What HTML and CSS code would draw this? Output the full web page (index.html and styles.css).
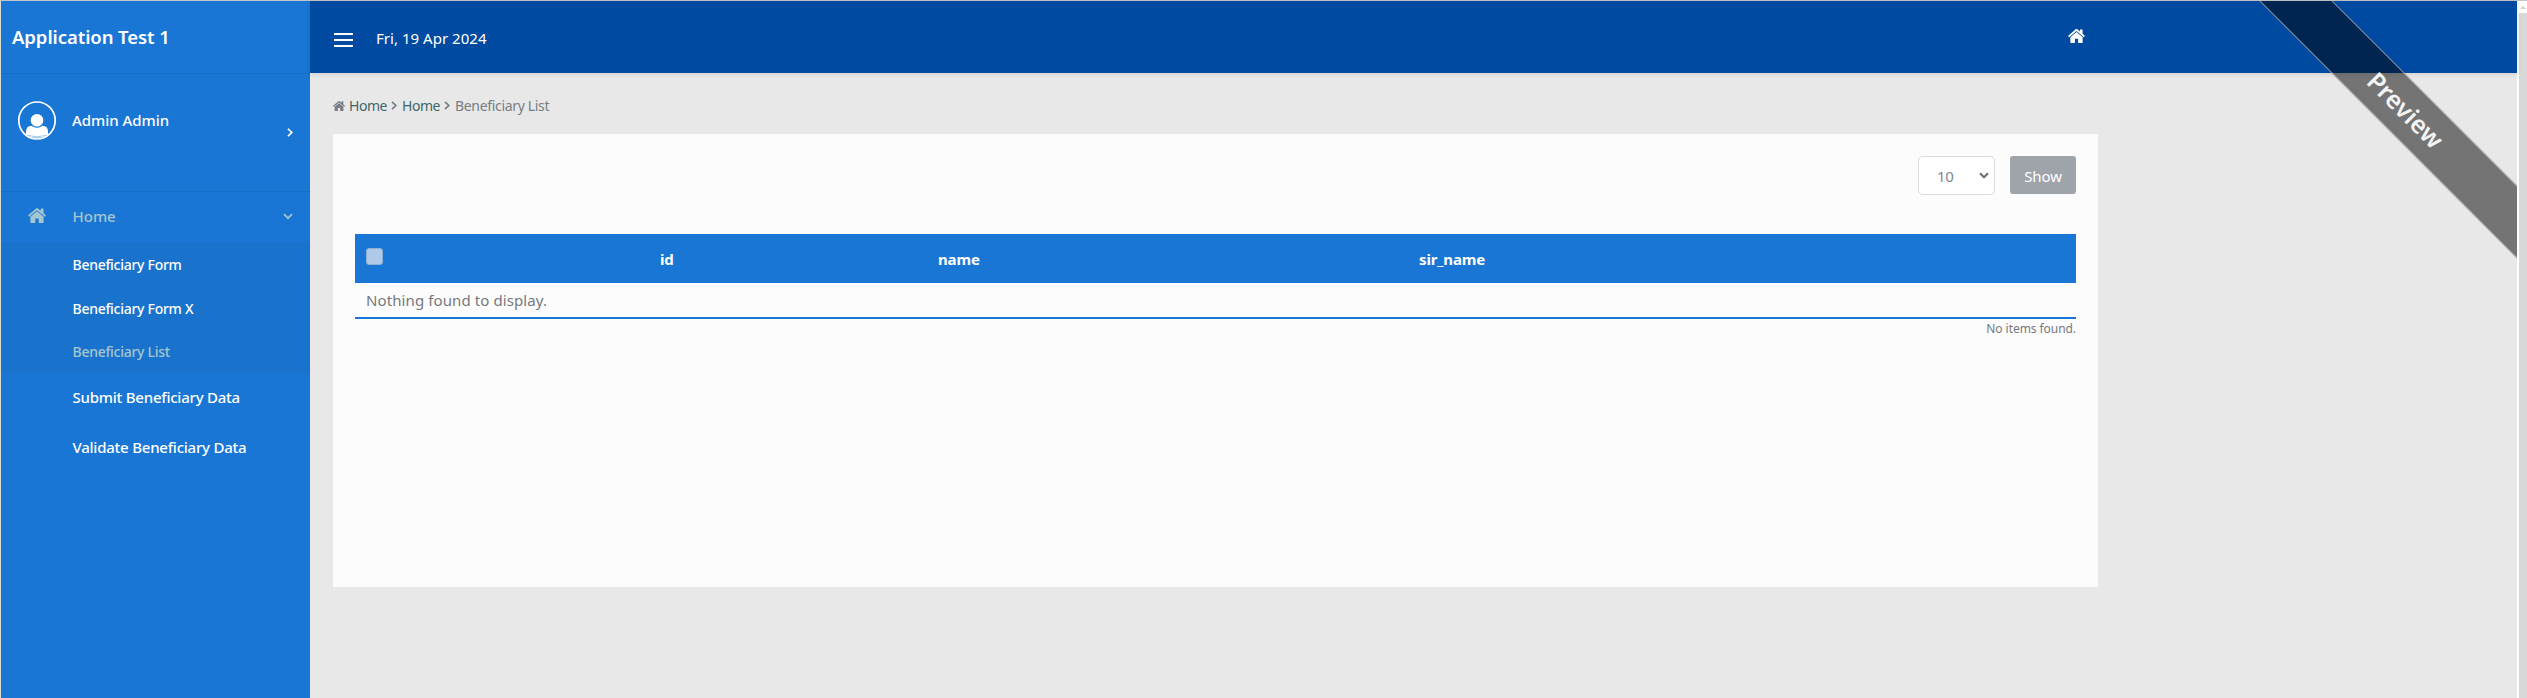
FILE: index.html
```html
<!DOCTYPE html>
<html lang="en">
<head>
<meta charset="utf-8">
<title>Beneficiary List</title>
<link rel="stylesheet" href="styles.css">
</head>
<body>
<svg class="defs" width="0" height="0" aria-hidden="true">
  <symbol id="house" viewBox="0 0 18 15">
    <path d="M9 3.2 15.6 8.8V14.2q0 .8-.8.8H10.7V10.4H7.3V15H3.2q-.8 0-.8-.8V8.800z"/>
    <path d="M8.1.4q.9-.7 1.8 0L12.7 2.8V.9q0-.4.4-.4h2q.4 0 .4.4v4.300l2.300 2q.3.3 0 .6l-.6.7q-.3.3-.6 0L9 2.200 1.400 8.500q-.3.3-.6 0L.2 7.800q-.3-.3 0-.6z"/>
  </symbol>
  <symbol id="angle" viewBox="0 0 6 9"><path d="M1 .8 4.800 4.500 1 8.200" fill="none" stroke="currentColor" stroke-width="1.700"/></symbol>
</svg>
<div class="app">
  <aside class="sidebar">
    <div class="brand"><span>Application Test 1</span></div>
    <div class="profile">
      <svg class="avatar" viewBox="0 0 38 39"><ellipse cx="19" cy="19.5" rx="18.2" ry="18.5" fill="none" stroke="#fff" stroke-width="1.7"/><circle cx="19" cy="19.2" r="6.3" fill="#fff"/><path d="M8 33.5v-2.8q0-6 5.500-6 2.500 2 5.500 2t5.500-2q5.500 0 5.500 6v2.800q-4.500 3.300-11 3.300t-11-3.300z" fill="#fff"/><path d="M9.500 34.300q9.500 3 19 0" stroke="#8dbbe9" stroke-width=".8" fill="none"/></svg>
      <span>Admin Admin</span>
      <svg class="profile-arrow"><use href="#angle"/></svg>
    </div>
    <nav>
      <a class="item parent active"><svg class="nav-house"><use href="#house"/></svg><span>Home</span><svg class="caret" viewBox="0 0 10 7"><path d="M1 1.200 5 5.200 9 1.200" fill="none" stroke="currentColor" stroke-width="1.700"/></svg></a>
      <div class="submenu">
        <a>Beneficiary Form</a>
        <a>Beneficiary Form X</a>
        <a class="active">Beneficiary List</a>
      </div>
      <a class="item leaf">Submit Beneficiary Data</a>
      <a class="item leaf">Validate Beneficiary Data</a>
    </nav>
  </aside>
  <main>
    <header>
      <div class="burger"><i></i><i></i><i></i></div>
      <span class="date">Fri, 19 Apr 2024</span>
      <svg class="top-house"><use href="#house"/></svg>
    </header>
    <div class="crumbs">
      <svg class="crumb-house"><use href="#house"/></svg>
      <a>Home</a><svg class="sep"><use href="#angle"/></svg>
      <a>Home</a><svg class="sep"><use href="#angle"/></svg>
      <span class="current">Beneficiary List</span>
    </div>
    <section class="panel">
      <div class="controls">
        <div class="select"><span>10</span><svg viewBox="0 0 10 7"><path d="M1 1.200 5 5.200 9 1.200" fill="none" stroke="#6d7275" stroke-width="2.200"/></svg></div>
        <button class="show">Show</button>
      </div>
      <table>
        <colgroup><col class="c1"><col class="c2"><col class="c3"><col></colgroup>
        <thead><tr><th><span class="check"></span></th><th>id</th><th>name</th><th>sir_name</th></tr></thead>
        <tbody><tr><td colspan="4">Nothing found to display.</td></tr></tbody>
      </table>
      <div class="count"><span>No items found.</span></div>
    </section>
    <div class="ribbon-box"><div class="ribbon"><span>Preview</span></div></div>
  </main>
  <div class="scrollbar"><div class="up"></div><div class="thumb"></div></div>
</div>
</body>
</html>
```
FILE: styles.css
```css
* { box-sizing: border-box; }
body { margin: 0; font-family: "Noto Sans", "Open Sans", sans-serif; font-size: 15px; overflow: hidden; }
svg { display: block; fill: currentColor; flex: none; }
span, a { white-space: nowrap; }
.defs { position: absolute; }
.app { display: flex; height: 698px; border-top: 1px solid #c3c5c6; border-left: 1px solid #dcdccf; background: #e8e8e8; }

.sidebar { width: 309px; flex: none; background: #1976d5; color: #fff; font-weight: 500; }
.brand { height: 73px; border-bottom: 1px solid #156dc6; padding: 0 0 0 11px; line-height: 72px; font-size: 18.5px; font-weight: 600; letter-spacing: -.07px; }
.profile { height: 118px; border-bottom: 1px solid #156dc6; display: flex; align-items: flex-start; padding: 27px 17px 0 17px; line-height: 39px; letter-spacing: -.03px; }
.avatar { width: 38px; height: 39px; margin-right: 16px; }
.profile-arrow { width: 6px; height: 9px; margin: 27px 0 0 auto; }
.item { display: flex; align-items: center; height: 50px; line-height: 50px; }
.item.leaf { padding: 0 0 2px 71.5px; letter-spacing: -.23px; }
.item.parent { padding: 0 17px 2px 27px; }
.active { color: #a6c6cf; }
.nav-house { width: 18px; height: 15px; margin: -2px 26.5px 0 0; }
.caret { width: 10px; height: 7px; margin-left: auto; }
.submenu { background: #1973cc; height: 131px; padding-top: 1px; }
.submenu a { display: block; height: 43.5px; line-height: 43px; padding-left: 71.5px; font-size: 14px; letter-spacing: -.28px; }

main { flex: 1; min-width: 0; position: relative; }
header { height: 72px; background: #004ba1; color: #fff; display: flex; align-items: center; padding-left: 24px; box-shadow: 0 1px 5px rgba(0,0,0,.12); }
.burger { width: 19px; height: 14px; display: flex; flex-direction: column; justify-content: space-between; margin: 6px 1px 0 0; }
.burger i { height: 2px; background: #fff; }
.date { margin: 2px 0 0 22px; width: 111px; line-height: 20px; letter-spacing: .03px; }
.top-house { width: 17px; height: 14px; margin: -2px 0 0 1581px; }

.crumbs { height: 61px; display: flex; align-items: center; padding: 4px 0 0 23px; font-size: 14px; color: #777d82; letter-spacing: -.33px; }
.crumbs a { color: #3f6668; width: 38px; margin-right: 4px; letter-spacing: -.45px; }
.crumb-house { width: 12px; height: 10px; margin-right: 4px; }
.sep { width: 6px; height: 9px; margin-right: 5px; }

.panel { margin-left: 23px; width: 1765px; height: 453px; background: #fcfcfc; padding: 22px 22px 0; color: #75797d; }
.controls { display: flex; justify-content: flex-end; gap: 15px; height: 78px; }
.select { width: 77px; height: 39px; border: 1px solid #d9dce3; border-radius: 5px; display: flex; align-items: center; justify-content: space-between; padding: 0 5px 0 18px; color: #80868b; background: #fff; letter-spacing: -.4px; }
.select svg { width: 10px; height: 7px; margin-top: -1px; }
.show { width: 66px; height: 38px; border: 0; border-radius: 3px; background: #9fa3aa; color: #fff; font: 400 15px/20px "Noto Sans", sans-serif; padding: 1px 0 0; letter-spacing: -.1px; }
table { width: 1721px; table-layout: fixed; border-collapse: separate; border-spacing: 0; }
.c1 { width: 294px; } .c2 { width: 278px; } .c3 { width: 481px; }
th { height: 49px; background: #1976d5; color: #fff; padding: 0 11px; text-align: left; font-weight: 700; line-height: 20px; letter-spacing: -.15px; }
td { height: 36px; padding: 0 11px; border-bottom: 2px solid #1976d5; line-height: 20px; letter-spacing: .1px; }
.check { display: block; width: 17px; height: 17px; margin-top: -4px; border: 1px solid #8fb0d2; border-radius: 3px; background: #afcae8; }
.count { text-align: right; font-size: 12px; line-height: 20px; letter-spacing: -.06px; }

.ribbon-box { position: absolute; inset: 0; overflow: hidden; pointer-events: none; }
.ribbon { position: absolute; left: 1896px; top: 84px; width: 400px; height: 52px; transform: rotate(45deg); background: rgba(0,0,0,.5); border: solid rgba(255,255,255,.5); border-width: 1px 0; color: #f4f4f4; font-size: 25px; font-weight: 600; line-height: 49px; text-align: center; padding-right: 2px; }

.scrollbar { width: 10px; flex: none; background: #fff; border-left: 2px solid #fff; display: flex; flex-direction: column; }
.up { height: 12px; flex: none; display: flex; align-items: center; justify-content: center; }
.up::before { content: ""; border: 3px solid transparent; border-top: 0; border-bottom: 3px solid #d0d0d0; }
.thumb { flex: 1; background: #d8d8d8; }
```
